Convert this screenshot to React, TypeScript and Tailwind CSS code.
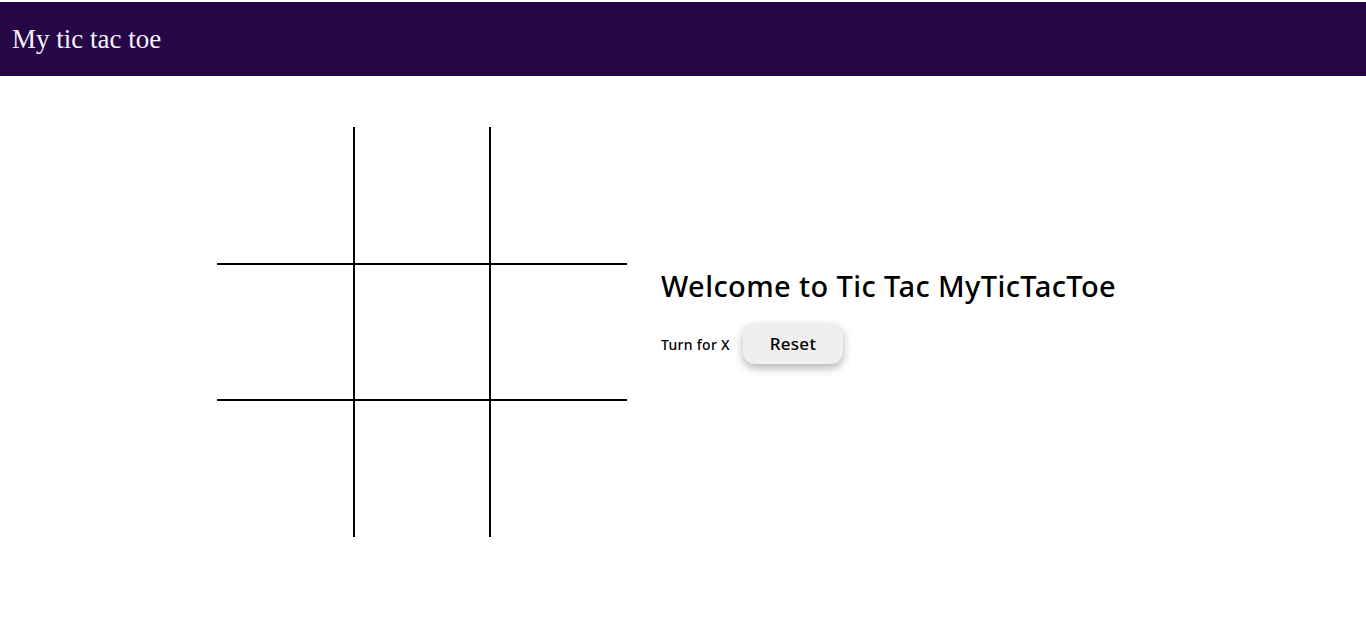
import React from "react";

export default function App() {
  const cells = Array.from({ length: 9 }, (_, i) => i);
  const colW = ["w-[138px]", "w-[136px]", "w-[136px]"];
  const rowH = ["h-[138px]", "h-[136px]", "h-[136px]"];
  return (
    <div className="min-h-[620px] bg-white">
      <header className="mt-[2px] h-[74px] bg-[#260645] flex items-center pl-3">
        <h1 className="text-[27px] text-[#f4f4ff] font-['Liberation_Serif',serif] leading-none">My tic tac toe</h1>
      </header>
      <main className="flex pl-[217px] pt-[51px]">
        <div className="grid grid-cols-[138px_136px_136px]">
          {cells.map((i) => {
            const r = Math.floor(i / 3);
            const c = i % 3;
            return (
              <div
                key={i}
                className={`${colW[c]} ${rowH[r]} border-black ${c < 2 ? "border-r-2" : ""} ${r < 2 ? "border-b-2" : ""}`}
              />
            );
          })}
        </div>
        <div className="ml-[34px] pt-[142px] font-['Noto_Sans',sans-serif]">
          <h2 className="text-[29px] font-medium leading-[34px] text-black tracking-[0.4px]">Welcome to Tic Tac MyTicTacToe</h2>
          <div className="mt-[20px] flex items-center">
            <span className="text-[14px] font-medium text-black tracking-[0.3px] translate-y-[1px]">Turn for X</span>
            <button className="ml-[13px] w-[100px] h-[41px] rounded-[12px] bg-[#efefef] text-[17px] font-medium text-black tracking-[0.3px] shadow-[0_4px_10px_rgba(0,0,0,0.3)]">
              Reset
            </button>
          </div>
        </div>
      </main>
    </div>
  );
}
